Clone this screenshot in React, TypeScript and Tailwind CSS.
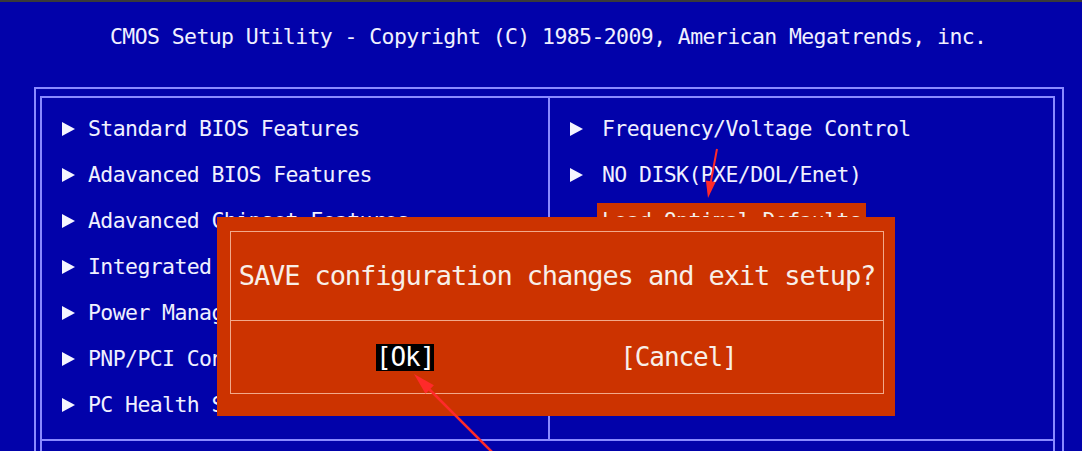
import React from "react";

const Tri = () => (
  <svg width="13" height="14" viewBox="0 0 13 14" className="shrink-0">
    <polygon points="0,0 13,7 0,14" fill="#f4f4ff" />
  </svg>
);

const leftItems = [
  "Standard BIOS Features",
  "Adavanced BIOS Features",
  "Adavanced Chipset Features",
  "Integrated Peripherals",
  "Power Management Setup",
  "PNP/PCI Configurations",
  "PC Health Status",
];

export default function App() {
  return (
    <div
      className="relative w-[1082px] h-[451px] overflow-hidden bg-[#0202aa] text-[#f0f0ff]"
      style={{ fontFamily: '"DejaVu Sans Mono", "Liberation Mono", monospace' }}
    >
      <div className="h-[2px] bg-[#3a3a3a]" />
      <div className="h-[70px] flex items-center pl-[110px] text-[21.5px] tracking-[-0.6px] whitespace-pre">
        CMOS Setup Utility - Copyright (C) 1985-2009, American Megatrends, inc.
      </div>
      <div className="mt-[15px] ml-[34px] w-[1030px] h-[400px] border-2 border-[#8a8aff] pt-[7px] pl-[4px] pr-[7px]">
        <div className="h-full border-t-2 border-l-2 border-r-2 border-[#8a8aff]">
          <div className="flex h-[343px] border-b-2 border-[#8a8aff] text-[21.5px] tracking-[-0.6px] whitespace-pre">
            <div className="w-[508px] border-r-2 border-[#8a8aff] pt-[8px] pl-[20px]">
              {leftItems.map((t) => (
                <div key={t} className="h-[46px] flex items-center">
                  <Tri />
                  <span className="ml-[13px]">{t}</span>
                </div>
              ))}
            </div>
            <div className="flex-1 pt-[8px] pl-[20px]">
              <div className="h-[46px] flex items-center">
                <Tri />
                <span className="ml-[19px]">Frequency/Voltage Control</span>
              </div>
              <div className="h-[46px] flex items-center">
                <Tri />
                <span className="ml-[19px]">NO DISK(PXE/DOL/Enet)</span>
              </div>
              <div className="h-[46px] flex items-center pl-[27px]">
                <span className="h-[36px] flex items-center px-[5px] bg-[#cc3300] text-[#f4f0ea]">
                  Load Optimal Defaults
                </span>
              </div>
            </div>
          </div>
        </div>
      </div>

      {/* Dialog */}
      <div className="absolute left-[217px] top-[217px] w-[678px] h-[199px] bg-[#cc3300] pl-[13px] pr-[11px] pt-[14px] pb-[22px] text-[#f8efe8]">
        <div className="h-full border border-[#f2a98a] flex flex-col">
          <div className="h-[89px] border-b border-[#f2a98a] flex items-center justify-center text-[27px] tracking-[-1.1px] whitespace-pre">
            SAVE configuration changes and exit setup?
          </div>
          <div className="flex-1 flex items-center pl-[145px] text-[26px] tracking-[-1.1px] whitespace-pre">
            <span className="bg-black text-white h-[27px] flex items-center">[Ok]</span>
            <span className="ml-[186px]">[Cancel]</span>
          </div>
        </div>
      </div>

      {/* Annotation arrows */}
      <svg
        className="absolute left-0 top-0 pointer-events-none"
        width="1082"
        height="451"
        viewBox="0 0 1082 451"
      >
        <line x1="717" y1="149" x2="710" y2="186" stroke="#ff2a2a" strokeWidth="2" />
        <polygon points="708,198 715.7,182 705.9,180.4" fill="#ff2a2a" />
        <line x1="492" y1="452" x2="426" y2="386" stroke="#ff2a2a" strokeWidth="2.5" />
        <polygon points="414,374 425.5,393.8 433.9,385.2" fill="#ff2a2a" />
      </svg>
    </div>
  );
}
